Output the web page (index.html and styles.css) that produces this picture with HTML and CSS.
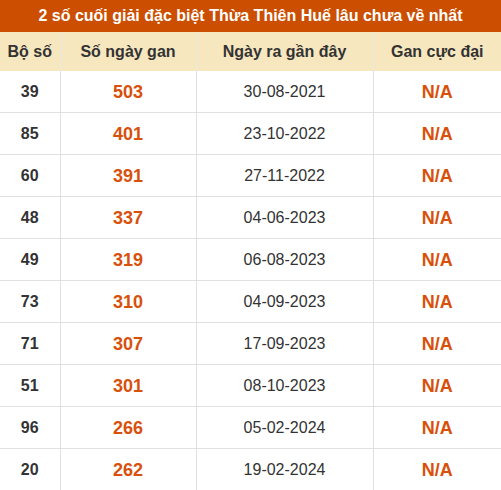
FILE: index.html
```html
<!DOCTYPE html>
<html>
<head>
<meta charset="utf-8">
<link rel="stylesheet" href="styles.css">
</head>
<body>
<div class="title">2 số cuối giải đặc biệt Thừa Thiên Huế lâu chưa về nhất</div>
<table class="gan">
<colgroup><col class="c1"><col class="c2"><col class="c3"><col class="c4"></colgroup>
<thead>
<tr><th>Bộ số</th><th>Số ngày gan</th><th>Ngày ra gần đây</th><th>Gan cực đại</th></tr>
</thead>
<tbody>
<tr><td class="num">39</td><td class="hot">503</td><td class="date">30-08-2021</td><td class="hot">N/A</td></tr>
<tr><td class="num">85</td><td class="hot">401</td><td class="date">23-10-2022</td><td class="hot">N/A</td></tr>
<tr><td class="num">60</td><td class="hot">391</td><td class="date">27-11-2022</td><td class="hot">N/A</td></tr>
<tr><td class="num">48</td><td class="hot">337</td><td class="date">04-06-2023</td><td class="hot">N/A</td></tr>
<tr><td class="num">49</td><td class="hot">319</td><td class="date">06-08-2023</td><td class="hot">N/A</td></tr>
<tr><td class="num">73</td><td class="hot">310</td><td class="date">04-09-2023</td><td class="hot">N/A</td></tr>
<tr><td class="num">71</td><td class="hot">307</td><td class="date">17-09-2023</td><td class="hot">N/A</td></tr>
<tr><td class="num">51</td><td class="hot">301</td><td class="date">08-10-2023</td><td class="hot">N/A</td></tr>
<tr><td class="num">96</td><td class="hot">266</td><td class="date">05-02-2024</td><td class="hot">N/A</td></tr>
<tr><td class="num">20</td><td class="hot">262</td><td class="date">19-02-2024</td><td class="hot">N/A</td></tr>
</tbody>
</table>
</body>
</html>
```
FILE: styles.css
```css
html, body {
  margin: 0;
  padding: 0;
  background: #fff;
  font-family: "Liberation Sans", Arial, sans-serif;
}
.title {
  height: 32px;
  line-height: 31px;
  background: #cc4e00;
  color: #fff;
  font-weight: bold;
  font-size: 16px;
  text-align: center;
}
.gan {
  width: 501px;
  border-collapse: collapse;
  table-layout: fixed;
}
.c1 { width: 60px; }
.c2 { width: 136px; }
.c3 { width: 177px; }
.c4 { width: 128px; }
.gan th {
  height: 39px;
  padding: 0;
  background: #f7e7bf;
  color: #333;
  font-size: 16px;
  font-weight: bold;
  border-left: 1px solid #e8e8e8;
  text-align: center;
}
.gan td {
  height: 40px;
  padding: 1px 0 0;
  text-align: center;
  border-left: 1px solid #e0e0e0;
  border-bottom: 1px solid #e0e0e0;
  color: #333;
  font-size: 16px;
}
.gan th:first-child, .gan td:first-child { border-left: none; }
.gan td.num { font-weight: bold; font-size: 16px; }
.gan td.hot { color: #d9500a; font-weight: bold; font-size: 18px; }
.gan td.date { color: #333; }
```
